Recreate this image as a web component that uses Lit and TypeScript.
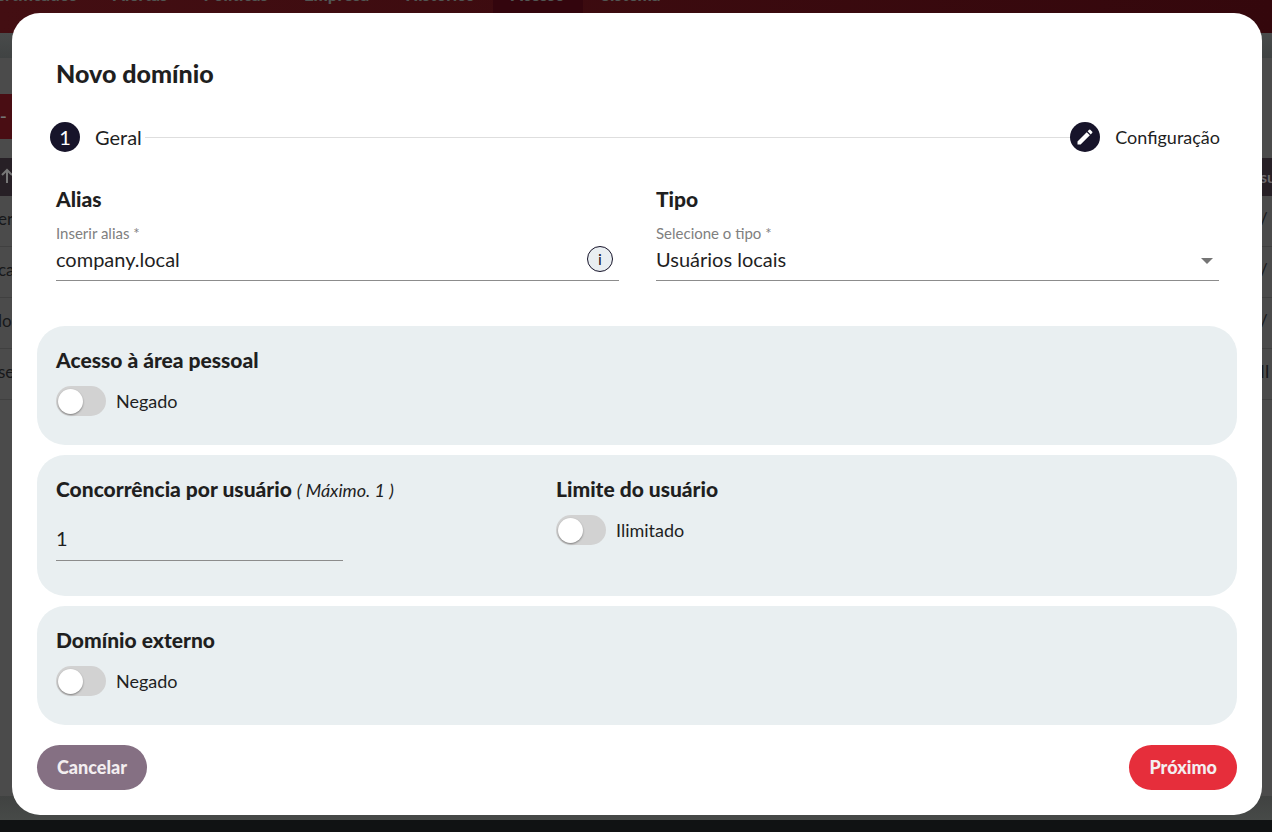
import { LitElement, html, css } from "lit";
import { customElement, property } from "lit/decorators.js";

@customElement("toggle-switch")
class ToggleSwitch extends LitElement {
  @property() label = "";
  @property() name = "";

  static styles = css`
    :host { display: block; }
    .toggle { display: inline-flex; align-items: center; gap: 10px; font-size: 18px; line-height: 24px; cursor: pointer; }
    .track {
      appearance: none; box-sizing: border-box; width: 50px; height: 30px; margin: 0; padding: 3px 2px;
      border-radius: 15px; background: #d2d2d2; cursor: pointer;
    }
    .track::before {
      content: ""; display: block; width: 25px; height: 25px; border-radius: 50%;
      background: #fff; box-shadow: 0 1px 2px rgba(0, 0, 0, 0.4);
    }
    .track:checked { background: #e62e3b; }
    .track:checked::before { margin-left: 21px; }
  `;

  render() {
    return html`<label class="toggle"><input class="track" type="checkbox" name=${this.name} /><span>${this.label}</span></label>`;
  }
}

@customElement("page-backdrop")
class PageBackdrop extends LitElement {
  static styles = css`
    :host { display: flex; flex-direction: column; height: 100%; background: #4b4b4b; color: #17181a; overflow: hidden; }
    .nav { display: flex; flex: none; height: 66px; margin-top: -33px; background: linear-gradient(90deg, #430e12, #34070c); }
    .tab { padding: 16px 18px 0; color: #515653; font-size: 17px; line-height: 24px; font-weight: 900; text-decoration: none; }
    .tab.first { padding-left: 0; margin-left: -4px; }
    .tab.active { background: #33050d; }
    .band { flex: none; height: 25px; background: linear-gradient(#494b4b, #404343); }
    .tools { flex: none; height: 64px; padding-top: 36px; }
    .tool { display: block; width: 60px; height: 45px; padding: 0; border: 0; background: #490d13; color: #747474; font-size: 20px; text-align: left; }
    .list { flex: none; width: 100%; border-collapse: collapse; font-size: 17px; table-layout: fixed; }
    .list th { height: 36px; padding: 0 0 2px; background: #272026; color: #6a676a; font-size: 16px; text-align: left; }
    .list td { height: 45px; padding: 0 0 5px; border-bottom: 1px solid #404040; text-indent: -2px; }
    .list .end { width: 12px; text-indent: 0; white-space: nowrap; overflow: hidden; }
    .arrow { display: block; fill: none; stroke: #777; stroke-width: 2; }
    .foot { margin-top: auto; height: 24px; flex: none; background: linear-gradient(#404241, #474a48); }
    .base { height: 12px; flex: none; background: #101213; }
  `;

  render() {
    const tabs = ["ertificados", "Alertas", "Políticas", "Empresa", "Histórico", "Acesso", "Sistema"];
    const rows = [["ers", "/"], ["car", "/"], ["lo", "/ I"], ["se", " II"]];
    return html`
      <nav class="nav">
        ${tabs.map((t, i) => html`<a class="tab ${i === 0 ? "first" : ""} ${t === "Acesso" ? "active" : ""}" href="#">${t}</a>`)}
      </nav>
      <div class="band"></div>
      <div class="tools"><button class="tool">-</button></div>
      <table class="list">
        <thead>
          <tr>
            <th><svg class="arrow" width="14" height="16" viewBox="0 0 14 16"><path d="M7 15V2M2 7l5-5 5 5" /></svg></th>
            <th class="end">su</th>
          </tr>
        </thead>
        <tbody>${rows.map((r) => html`<tr><td>${r[0]}</td><td class="end">${r[1]}</td></tr>`)}</tbody>
      </table>
      <div class="foot"></div>
      <div class="base"></div>
    `;
  }
}

@customElement("app-root")
class AppRoot extends LitElement {
  static styles = css`
    :host { display: block; position: relative; min-height: 100vh; box-sizing: border-box; padding: 13px 10px 17px 12px; font-family: Lato, "Liberation Sans", sans-serif; color: #1f1f1f; }
    .behind { position: absolute; inset: 0; }
    .dialog { position: relative; box-sizing: border-box; padding: 46px 25px 25px; border-radius: 28px; background: #fff; }
    .title { margin: 0 19px; font-size: 25px; line-height: 28px; font-weight: 900; }
    .steps { display: flex; align-items: center; margin: 35px 17px 0 13px; padding: 0; list-style: none; }
    .step { display: flex; align-items: center; gap: 15px; font-size: 18px; line-height: 24px; }
    .step.current { font-size: 20px; }
    .dot { display: grid; place-items: center; width: 30px; height: 30px; border-radius: 50%; background: #17142a; color: #fff; }
    .rule { flex: 1; height: 1px; margin-left: 3px; background: #dedede; }
    .fields { display: grid; grid-template-columns: 1fr 1fr; margin: 36px 0 45px; }
    .field { padding: 0 18px 0 19px; }
    .heading { display: block; margin: 0; padding-bottom: 2px; font-size: 21px; line-height: 22px; font-weight: 900; }
    .hint { display: block; margin-top: 12px; font-size: 15px; line-height: 18px; color: #808080; }
    .line { display: flex; align-items: center; height: 38px; border-bottom: 1px solid #8c8c8c; }
    .control { box-sizing: border-box; flex: 1; min-width: 0; height: 100%; padding: 0 0 4px; border: 0; outline: 0; background: none; font: inherit; font-size: 20px; color: inherit; appearance: none; }
    .info { box-sizing: border-box; width: 26px; height: 26px; margin: 0 6px 4px 0; padding: 0; border: 1px solid #17142a; border-radius: 50%; background: #e9eef1; font: inherit; font-size: 16px; line-height: 24px; color: #17142a; }
    .caret { margin-right: 6px; fill: #757575; }
    .cards { display: grid; gap: 10px; }
    .card { display: grid; grid-template-columns: 5fr 7fr; padding: 23px 0 29px; border-radius: 28px; background: #e9eff1; }
    .card.tall { padding-bottom: 35px; }
    .cell { padding-left: 19px; }
    .cell toggle-switch { height: 30px; margin-top: 13px; }
    .note { font-size: 18px; font-weight: 400; }
    .line.short { width: 287px; height: 40px; margin-top: 17px; }
    .actions { display: flex; justify-content: space-between; margin-top: 20px; }
    .button { height: 45px; padding: 0 20px 2px; border: 0; border-radius: 23px; background: #e62e3b; color: #f3eef0; font: inherit; font-size: 18px; font-weight: 900; }
    .button.quiet { background: #857083; }
  `;

  render() {
    return html`
      <page-backdrop class="behind"></page-backdrop>
      <form class="dialog" role="dialog" aria-labelledby="title">
        <h1 class="title" id="title">Novo domínio</h1>
        <ol class="steps">
          <li class="step current"><span class="dot">1</span>Geral</li>
          <li class="rule" role="presentation"></li>
          <li class="step">
            <span class="dot"><svg width="20" height="20" viewBox="0 0 24 24" fill="#fff"><path d="M3 17.25V21h3.75L17.81 9.94l-3.75-3.75L3 17.25zM20.71 7.04a1 1 0 0 0 0-1.41l-2.34-2.34a1 1 0 0 0-1.41 0l-1.83 1.83 3.75 3.75 1.83-1.83z" /></svg></span>Configuração
          </li>
        </ol>
        <div class="fields">
          <div class="field">
            <h2 class="heading">Alias</h2>
            <label class="hint" for="alias">Inserir alias *</label>
            <div class="line">
              <input class="control" id="alias" value="company.local" />
              <button class="info" type="button">i</button>
            </div>
          </div>
          <div class="field">
            <h2 class="heading">Tipo</h2>
            <label class="hint" for="kind">Selecione o tipo *</label>
            <div class="line">
              <select class="control" id="kind"><option>Usuários locais</option></select>
              <svg class="caret" width="12" height="6" viewBox="0 0 12 6"><path d="M0 0h12L6 6z" /></svg>
            </div>
          </div>
        </div>
        <div class="cards">
          <section class="card">
            <div class="cell"><h2 class="heading">Acesso à área pessoal</h2><toggle-switch name="personal" label="Negado"></toggle-switch></div>
          </section>
          <section class="card tall">
            <div class="cell">
              <label class="heading" for="limit">Concorrência por usuário <em class="note">( Máximo. 1 )</em></label>
              <div class="line short"><input class="control" id="limit" value="1" /></div>
            </div>
            <div class="cell"><h2 class="heading">Limite do usuário</h2><toggle-switch name="limited" label="Ilimitado"></toggle-switch></div>
          </section>
          <section class="card">
            <div class="cell"><h2 class="heading">Domínio externo</h2><toggle-switch name="external" label="Negado"></toggle-switch></div>
          </section>
        </div>
        <div class="actions">
          <button class="button quiet" type="button">Cancelar</button>
          <button class="button" type="button">Próximo</button>
        </div>
      </form>
    `;
  }
}
